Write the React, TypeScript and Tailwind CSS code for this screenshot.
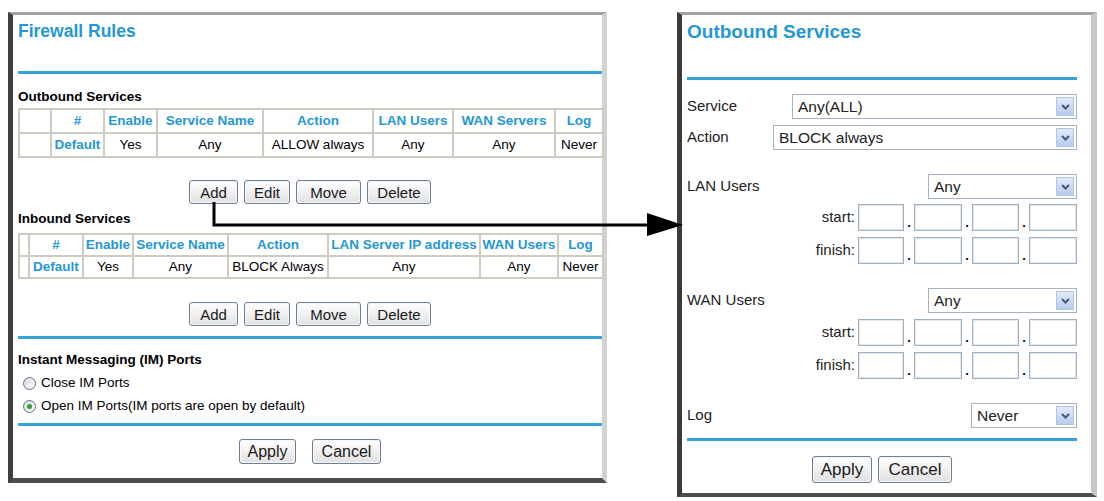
import React from "react";

const Btn = ({ label, w, h }: { label: string; w: string; h: string }) => (
    <button
        className={`${w} ${h} rounded-[3px] border border-[#6d7f95] bg-linear-to-b from-[#ffffff] to-[#e1e1e1] text-[#1a1a1a] leading-none shadow-[inset_0_0_0_1px_#f6f6f6]`}
    >
        {label}
    </button>
);

const Radio = ({ checked }: { checked?: boolean }) => (
    <span className="w-[13px] h-[13px] rounded-full border border-[#5f7490] bg-linear-to-br from-[#d9d9d9] to-[#ffffff] flex items-center justify-center">
        {checked && <span className="w-[5px] h-[5px] rounded-full bg-[#31a131]" />}
    </span>
);

const Select = ({ value, w }: { value: string; w: string }) => (
    <div className={`${w} h-[25px] flex items-center border border-[#a6b2c0] bg-white pl-[5px] pr-[2px]`}>
        <span className="flex-1 text-[15.5px] text-[#222]">{value}</span>
        <span className="w-[18px] h-[19px] flex items-center justify-center border border-[#b3c4e2] bg-linear-to-b from-[#e2eaf9] to-[#b8ccef]">
            <svg width="9" height="6" viewBox="0 0 9 6">
                <path d="M1 1 L4.5 4.5 L8 1" stroke="#45597d" strokeWidth="2" fill="none" />
            </svg>
        </span>
    </div>
);

const IpBox = ({ w }: { w: string }) => (
    <span className={`${w} h-[27px] border border-[#9fb0c1] shadow-[inset_0_0_0_1px_#e2e7ec] bg-white`} />
);

const Dot = () => <span className="w-[10px] self-end pb-[2px] text-center text-[13px] leading-none font-bold">.</span>;

const IpRow = ({ label, mt }: { label: string; mt: string }) => (
    <div className={`flex items-center justify-end h-[27px] ${mt}`}>
        <span className="mr-[3px] text-[#222]">{label}</span>
        <IpBox w="w-[46px]" />
        <Dot />
        <IpBox w="w-[48px]" />
        <Dot />
        <IpBox w="w-[47px]" />
        <Dot />
        <IpBox w="w-[48px]" />
    </div>
);

const cell = "border-2 border-[#cfcbbf] p-0 text-center whitespace-nowrap";
const head = `${cell} text-[#2597d3] font-bold`;

const outboundCols = [32, 53, 53, 106, 110, 80, 102, 48];
const inboundCols = [10, 54, 50, 95, 100, 152, 78, 45];

const RuleTable = ({
    cols,
    headers,
    row,
    rowH,
}: {
    cols: number[];
    headers: string[];
    row: string[];
    rowH: string;
}) => (
    <table className="w-[584px] table-fixed border-collapse text-[13.5px] leading-[16px]">
        <colgroup>
            {cols.map((c, i) => (
                <col key={i} style={{ width: c }} />
            ))}
        </colgroup>
        <tbody>
            <tr className={rowH}>
                {headers.map((h, i) => (
                    <td key={i} className={head}>
                        {h}
                    </td>
                ))}
            </tr>
            <tr className={rowH}>
                {row.map((v, i) => (
                    <td key={i} className={i === 1 ? head : cell}>
                        {v}
                    </td>
                ))}
            </tr>
        </tbody>
    </table>
);

const ButtonRow = ({ mt }: { mt: string }) => (
    <div className={`flex justify-center gap-[6px] text-[15px] ${mt}`}>
        <Btn label="Add" w="w-[49px]" h="h-[24px]" />
        <Btn label="Edit" w="w-[46px]" h="h-[24px]" />
        <Btn label="Move" w="w-[65px]" h="h-[24px]" />
        <Btn label="Delete" w="w-[64px]" h="h-[24px]" />
    </div>
);

const FirewallRules = () => (
    <div className="flex flex-col w-[599px] h-[471px] ml-[8px] mt-[12px] border-l-[5px] border-l-[#404040] border-t-[3px] border-t-[#a3a3a3] border-r-[5px] border-r-[#d2d2d2] border-b-[5px] border-b-[#4d4d4d] pl-[5px] pt-[6px] bg-white">
        <h1 className="text-[17.5px] leading-[20px] font-bold text-[#2597d3]">Firewall Rules</h1>
        <div className="mt-[30px] h-[3px] bg-[#35a3d5]" />
        <div className="mt-[15px] text-[13.5px] leading-[16px] font-bold">Outbound Services</div>
        <div className="mt-[3px]">
            <RuleTable
                cols={outboundCols}
                rowH="h-[24px]"
                headers={["", "#", "Enable", "Service Name", "Action", "LAN Users", "WAN Servers", "Log"]}
                row={["", "Default", "Yes", "Any", "ALLOW always", "Any", "Any", "Never"]}
            />
        </div>
        <ButtonRow mt="mt-[22px]" />
        <div className="mt-[7px] text-[13.5px] leading-[16px] font-bold">Inbound Services</div>
        <div className="mt-[6px]">
            <RuleTable
                cols={inboundCols}
                rowH="h-[22px]"
                headers={["", "#", "Enable", "Service Name", "Action", "LAN Server IP address", "WAN Users", "Log"]}
                row={["", "Default", "Yes", "Any", "BLOCK Always", "Any", "Any", "Never"]}
            />
        </div>
        <ButtonRow mt="mt-[23px]" />
        <div className="mt-[10px] h-[3px] bg-[#35a3d5]" />
        <div className="mt-[13px] text-[13.5px] leading-[16px] font-bold">Instant Messaging (IM) Ports</div>
        <div className="mt-[7px] flex items-center h-[16px] pl-[5px] gap-[5px] text-[13.5px]">
            <Radio />
            <span>Close IM Ports</span>
        </div>
        <div className="mt-[7px] flex items-center h-[16px] pl-[5px] gap-[5px] text-[13.5px]">
            <Radio checked />
            <span>Open IM Ports(IM ports are open by default)</span>
        </div>
        <div className="mt-[9px] h-[3px] bg-[#35a3d5]" />
        <div className="mt-[13px] flex justify-center gap-[16px] text-[16px]">
            <Btn label="Apply" w="w-[57px]" h="h-[25px]" />
            <Btn label="Cancel" w="w-[69px]" h="h-[25px]" />
        </div>
    </div>
);

const Row = ({ label, mt, children }: { label: string; mt: string; children: React.ReactNode }) => (
    <div className={`flex items-center justify-between ${mt}`}>
        <span className="text-[#222]">{label}</span>
        {children}
    </div>
);

const OutboundServices = () => (
    <div className="flex flex-col w-[420px] h-[485px] ml-[70px] mt-[12px] border-l-[5px] border-l-[#3a3a3a] border-t-[3px] border-t-[#a3a3a3] border-r-[6px] border-r-[#c8c8c8] border-b-[4px] border-b-[#4d4d4d] pl-[5px] pr-[14px] pt-[6px] text-[15px] bg-white">
        <h1 className="text-[19px] leading-[22px] font-bold text-[#2597d3]">Outbound Services</h1>
        <div className="mt-[34px] h-[3px] bg-[#35a3d5]" />
        <Row label="Service" mt="mt-[14px]">
            <Select value="Any(ALL)" w="w-[285px]" />
        </Row>
        <Row label="Action" mt="mt-[6px]">
            <Select value="BLOCK always" w="w-[304px]" />
        </Row>
        <Row label="LAN Users" mt="mt-[24px]">
            <Select value="Any" w="w-[149px]" />
        </Row>
        <IpRow label="start:" mt="mt-[5px]" />
        <IpRow label="finish:" mt="mt-[6px]" />
        <Row label="WAN Users" mt="mt-[24px]">
            <Select value="Any" w="w-[149px]" />
        </Row>
        <IpRow label="start:" mt="mt-[6px]" />
        <IpRow label="finish:" mt="mt-[6px]" />
        <Row label="Log" mt="mt-[24px]">
            <Select value="Never" w="w-[106px]" />
        </Row>
        <div className="mt-[10px] h-[3px] bg-[#35a3d5]" />
        <div className="mt-[15px] flex justify-center gap-[6px] text-[17px]">
            <Btn label="Apply" w="w-[60px]" h="h-[27px]" />
            <Btn label="Cancel" w="w-[74px]" h="h-[27px]" />
        </div>
    </div>
);

export default function App() {
    return (
        <div className="relative w-[1104px] h-[501px] bg-white flex items-start font-['Liberation_Sans',Arial,sans-serif] text-black overflow-hidden">
            <FirewallRules />
            <OutboundServices />
            {/* connector from the Add button to the dialog */}
            <svg className="absolute left-0 top-0 pointer-events-none" width="1104" height="501">
                <path d="M214 202 V225 H650" stroke="#000" strokeWidth="3" fill="none" strokeLinejoin="miter" />
                <polygon points="647,213 683,225 647,236" fill="#000" />
            </svg>
        </div>
    );
}
